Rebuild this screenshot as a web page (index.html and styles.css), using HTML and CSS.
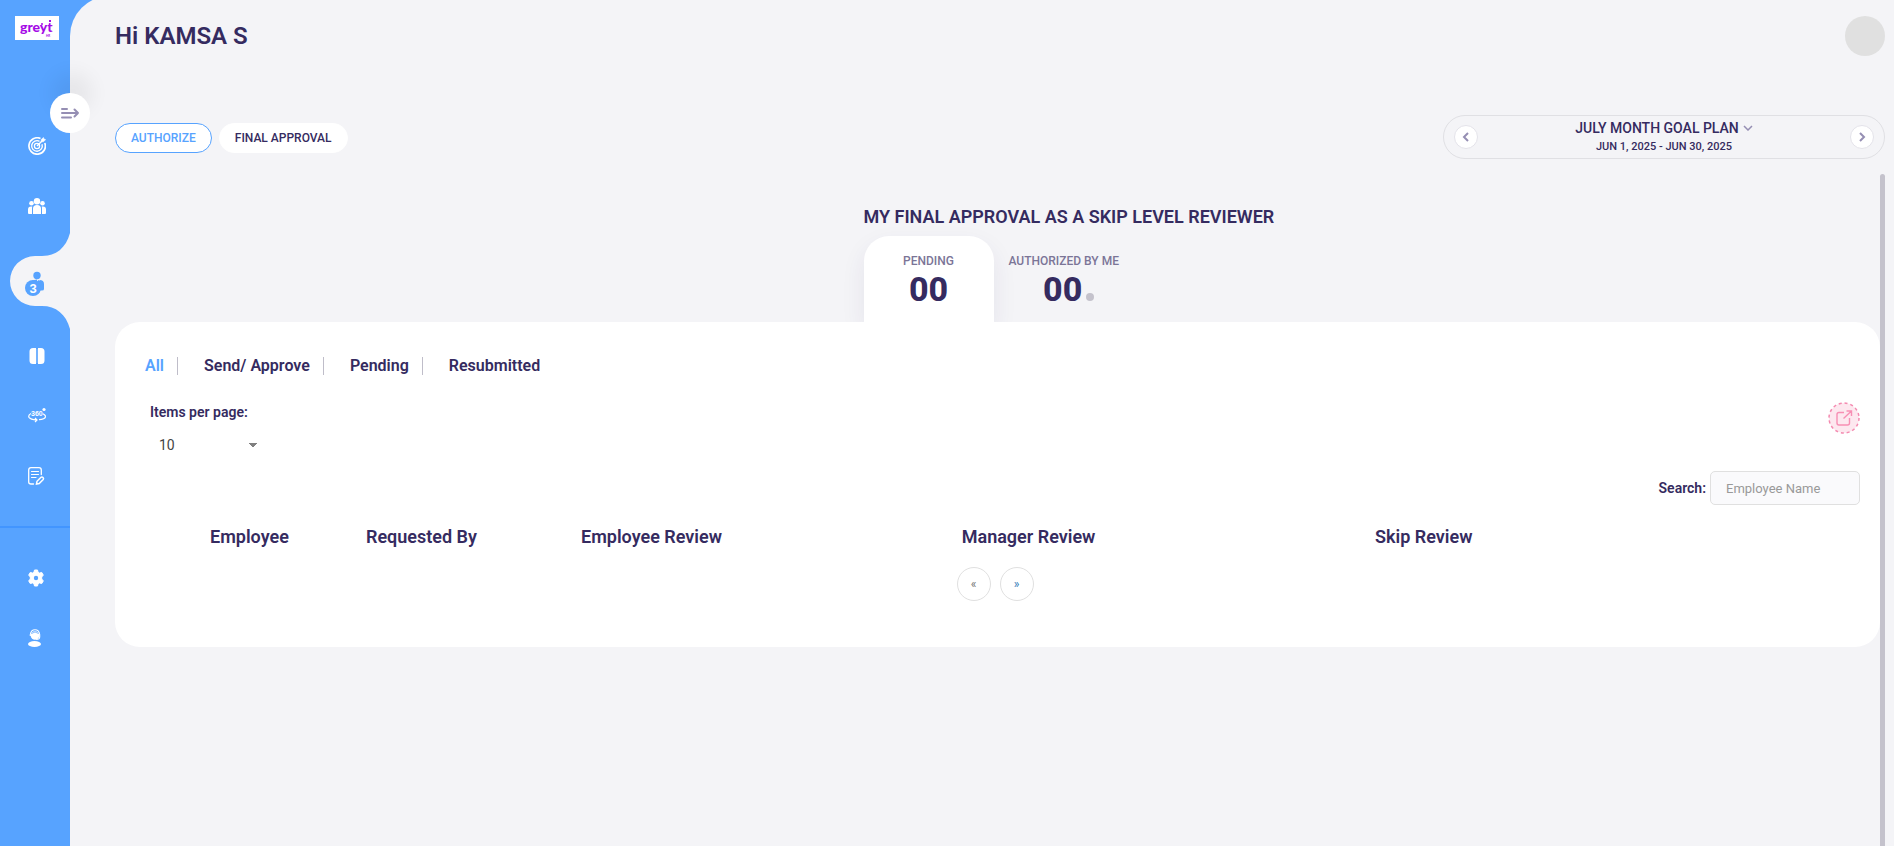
FILE: index.html
```html
<!doctype html>
<html lang="en">
  <head>
    <meta charset="utf-8">
    <meta name="viewport" content="width=device-width, initial-scale=1">
    <title>Goal plan approvals</title>
    <link rel="stylesheet" href="styles.css">
  </head>

  <body>
    <aside class="sidebar">
      <a href="#" class="logo" aria-label="greytHR">
        <svg width="44" height="24" viewBox="0 0 44 24">
          <text x="5" y="16" class="logo-text">greyt</text>
          <text x="31" y="21" class="logo-small">HR</text>
          <circle cx="27" cy="8" r="1"/>
          <rect x="34" y="4" width="2" height="2"/>
        </svg>
      </a>
      <button type="button" class="toggle" aria-label="Expand menu">
        <svg width="20" height="14" viewBox="0 0 20 14">
          <path d="M2 3h5M2 7h16M2 11.500h9M14.500 3.500L18 7l-3.500 3.500" fill="none" stroke="#958eb3" stroke-width="2" stroke-linecap="round" stroke-linejoin="round"/>
        </svg>
      </button>

      <nav class="menu">
        <a href="#" aria-label="Goals">
          <svg width="18" height="18" viewBox="0 0 18 18" fill="none" stroke="#fff">
            <path d="M12.500 1.500A8.200 8.200 0 1 0 16.800 6" stroke-width="1.700"/>
            <path d="M11.500 4.300A5.300 5.300 0 1 0 14 7.300" stroke-width="1.400"/>
            <circle cx="9" cy="9" r="2.600" stroke-width="1.300"/>
            <path d="M9 9l5-5" stroke-width="1.400"/>
            <path d="M13.200 4.800V2.600L15.500.4l.5 1.700 1.700.5-2.200 2.200z" fill="#fff" stroke-width=".5"/>
          </svg>
        </a>
        <a href="#" aria-label="Team">
          <svg width="18" height="18" viewBox="0 0 18 18" fill="#fff">
            <circle cx="9" cy="4.200" r="3.200"/>
            <circle cx="3.500" cy="6.300" r="2.300"/>
            <circle cx="14.500" cy="6.300" r="2.300"/>
            <path d="M5 17v-5.500Q5 8 9 8t4 3.500V17zM0 16v-3.500Q0 9.500 3 9.500h1.300Q4 10.300 4 12v5H1q-1 0-1-1zM18 16v-3.500q0-3-3-3h-1.300q.3.800.3 2.500v5h3q1 0 1-1z"/>
          </svg>
        </a>
        <a href="#" class="active" aria-label="Approvals">
          <svg width="70" height="96" viewBox="0 0 70 96">
            <path d="M70 0C66 15 56 23 42 23h-7a25 25 0 0 0 0 50h7c14 0 24 8 28 23z" fill="#f4f4f7"/>
            <g fill="#57a3ff">
              <circle cx="37" cy="42.500" r="3.700"/>
              <path d="M32 48q2-1.500 5-1.500v2l1.500-1.500 1 1v-1q4.500 0 4.500 4v5q0 1.500-2 1.500h-2v2h-8z"/>
              <circle cx="33" cy="55" r="8"/>
            </g>
            <text x="33" y="60" class="badge">3</text>
          </svg>
        </a>
        <a href="#" aria-label="Reviews">
          <svg width="18" height="18" viewBox="0 0 18 18" fill="#fff">
            <path d="M5 1h3v16H5q-3.500 0-3.500-3.500v-9Q1.500 1 5 1zM10 1h3q3.500 0 3.500 3.500v9Q16.500 17 13 17h-3z"/>
            <path d="M9 2v14" stroke="#fff" stroke-width=".7" opacity=".5"/>
          </svg>
        </a>
        <a href="#" class="feedback" aria-label="360 feedback">
          <svg width="18" height="18" viewBox="0 0 18 18" fill="none" stroke="#fff">
            <path d="M3 6.500Q0 8 1 10.300 2.500 12.500 8.500 12.800M7 11l2 2-2 2M11 12.700q6-.5 6.500-3 .2-1.500-2.500-3" stroke-width="1.200"/>
            <text x="3" y="9" class="deg">360</text>
            <circle cx="16" cy="2.500" r="1.600" fill="#fff" stroke="none"/>
          </svg>
        </a>
        <a href="#" aria-label="Reports">
          <svg width="18" height="18" viewBox="0 0 18 18" fill="none" stroke="#fff" stroke-linecap="round">
            <path d="M5.500 17H3Q.7 17 .7 15V3Q.7.700 3 .700h8q2.300 0 2.300 2.300v4.500" stroke-width="1.300"/>
            <path d="M3.500 4.500h7M3.500 7.500h7M3.500 10.500h4.500" stroke-width="1.200"/>
            <path d="M8.500 17l.5-2.700 4-4q1-.8 2 .2t.2 2l-4 4z" stroke-width="1.500"/>
          </svg>
        </a>
        <hr>
        <a href="#" aria-label="Settings">
          <svg width="16" height="18" viewBox="0 0 16 18">
            <path d="M6.500 1h3l.6 2.300 1.400.8 2.200-.7 1.600 2.700L13.700 8v2l1.600 1.900-1.600 2.700-2.200-.7-1.400.8L9.500 17h-3l-.6-2.300-1.400-.8-2.200.7-1.600-2.700L2.300 10V8L.7 6.100l1.600-2.700 2.200.7 1.400-.8z" fill="#fff" stroke="#fff" stroke-linejoin="round"/>
            <circle cx="8" cy="9" r="2.200" fill="#57a3ff"/>
          </svg>
        </a>
        <a href="#" aria-label="Support">
          <svg width="14" height="18" viewBox="0 0 14 18">
            <circle cx="7" cy="6.500" r="4.300" fill="#fff"/>
            <path d="M2.300 7V5.500Q3 .7 7 .7t4.700 4.800V8q0 2.500-3.500 2.500" fill="none" stroke="#fff" stroke-width="1.100"/>
            <path d="M3.500 4.500Q7 1.500 10.500 4.500" fill="none" stroke="#57a3ff" stroke-width=".7"/>
            <ellipse cx="6.500" cy="15" rx="6.500" ry="3" fill="#fff"/>
          </svg>
        </a>
      </nav>
    </aside>

    <main class="page">
      <header class="header">
        <h1>Hi KAMSA S</h1>
        <div class="avatar"></div>
      </header>

      <div class="toolbar">
        <div class="pills">
          <button type="button" class="pill selected">AUTHORIZE</button>
          <button type="button" class="pill">FINAL APPROVAL</button>
        </div>
        <div class="plan">
          <button type="button" class="round" aria-label="Previous plan">
            <svg width="8" height="10" viewBox="0 0 8 10"><path d="M6 1L2 5l4 4"/></svg>
          </button>
          <div class="plan-info">
            <a href="#" class="plan-name">JULY MONTH GOAL PLAN
              <svg width="10" height="6" viewBox="0 0 10 6"><path d="M1 1l4 4 4-4"/></svg>
            </a>
            <span class="plan-dates">JUN 1, 2025 - JUN 30, 2025</span>
          </div>
          <button type="button" class="round" aria-label="Next plan">
            <svg width="8" height="10" viewBox="0 0 8 10"><path d="M2 1l4 4-4 4"/></svg>
          </button>
        </div>
      </div>

      <div class="scroll-area">
        <div class="content">
          <section class="summary">
            <h2>MY FINAL APPROVAL AS A SKIP LEVEL REVIEWER</h2>
            <div class="tabs">
              <button type="button" class="tab current">
                <span class="tab-label">PENDING</span>
                <span class="count">00</span>
              </button>
              <button type="button" class="tab">
                <span class="tab-label">AUTHORIZED BY ME</span>
                <span class="count">00<i class="dot"></i></span>
              </button>
            </div>
          </section>

          <section class="card">
            <div class="filters">
              <a href="#" class="on">All</a>
              <a href="#">Send/ Approve</a>
              <a href="#">Pending</a>
              <a href="#">Resubmitted</a>
            </div>
            <div class="options">
              <div class="per-page">
                <label for="perPage">Items per page:</label>
                <select id="perPage">
                  <option>10</option>
                  <option>25</option>
                  <option>50</option>
                </select>
              </div>
              <button type="button" class="export" aria-label="Export">
                <svg width="32" height="32" viewBox="0 0 32 32" fill="none" stroke="#f78fb4">
                  <circle cx="16" cy="16" r="15" fill="#fde8ef" stroke="#f48ab0" stroke-width="1.500" stroke-dasharray="3 2.900"/>
                  <path d="M16 10.500h-5q-2 0-2 2V21q0 2 2 2h8.500q2 0 2-2v-5M15.500 16.500L23.500 9M18.500 9h5v5" stroke-width="1.400"/>
                </svg>
              </button>
            </div>
            <div class="search">
              <label for="search">Search:</label>
              <input id="search" type="text" placeholder="Employee Name">
            </div>
            <table>
              <thead>
                <tr>
                  <th class="col-check"></th>
                  <th class="col-employee">Employee</th>
                  <th class="col-requested">Requested By</th>
                  <th class="col-review">Employee Review</th>
                  <th class="col-manager">Manager Review</th>
                  <th>Skip Review</th>
                </tr>
              </thead>
            </table>
            <div class="pager">
              <button type="button" aria-label="Previous page">«</button>
              <button type="button" class="next" aria-label="Next page">»</button>
            </div>
          </section>
        </div>
        <div class="scrollbar"></div>
      </div>
    </main>
  </body>

</html>
```

FILE: styles.css
```css
* {
  box-sizing: border-box;
}

body {
  margin: 0;
  display: flex;
  min-height: 100vh;
  overflow: hidden;
  background: #57a3ff;
  color: #352b60;
  font-family: Roboto, "Liberation Sans", sans-serif;
}

a {
  color: inherit;
  text-decoration: none;
}

button {
  padding: 0;
  border: none;
  background: none;
  color: inherit;
  font-family: inherit;
  cursor: pointer;
}

svg {
  display: block;
}

.sidebar {
  position: relative;
  flex: none;
  width: 70px;
  padding-top: 16px;
  z-index: 1;
}

.logo {
  display: block;
  width: 44px;
  margin-left: 15px;
  background: white;
  fill: #a50be6;
}

.logo-text {
  font: 900 14px Lato, sans-serif;
}

.logo-small {
  font: 700 3px Lato, sans-serif;
}

/* sits over the edge of the sidebar */
.toggle {
  position: absolute;
  top: 93px;
  right: -20px;
  width: 40px;
  height: 40px;
  display: flex;
  align-items: center;
  justify-content: center;
  border-radius: 50%;
  background: white;
  box-shadow: 2px -20px 20px rgba(0, 0, 0, 0.06);
}

.menu {
  padding-top: 76px;
}

.menu a {
  display: flex;
  align-items: center;
  height: 60px;
  padding-left: 28px;
}

.menu .active {
  height: 90px;
  padding-left: 0;
}

.menu hr {
  height: 2px;
  margin: 20px 0;
  border: none;
  background: #4295ff;
}

.badge {
  fill: white;
  font: 700 13px "Liberation Sans", sans-serif;
  text-anchor: middle;
}

.deg {
  fill: white;
  stroke: none;
  font: 700 7px "Liberation Sans", sans-serif;
}

.page {
  flex: 1;
  display: flex;
  flex-direction: column;
  margin-top: -4px;
  padding: 20px 9px 0 45px;
  border-top-left-radius: 40px;
  background: #f4f4f7;
}

.header {
  display: flex;
  align-items: center;
  justify-content: space-between;
  height: 40px;
}

h1 {
  margin: 0;
  font-size: 24px;
  font-weight: 600;
}

.avatar {
  width: 40px;
  height: 40px;
  border-radius: 50%;
  background: #e0e0e0;
}

.toolbar {
  display: flex;
  align-items: center;
  justify-content: space-between;
  margin-top: 59px;
}

.pills {
  display: flex;
  gap: 7px;
  padding-top: 2px;
}

.pill {
  height: 30px;
  padding: 0 15px;
  border: 1px solid white;
  border-radius: 15px;
  background: white;
  font-size: 12px;
  font-weight: 500;
}

.pill.selected {
  border-color: #57a3ff;
  color: #57a3ff;
}

.plan {
  display: flex;
  align-items: center;
  justify-content: space-between;
  width: 442px;
  height: 44px;
  padding: 0 10px;
  border: 1px solid #e0e0e4;
  border-radius: 22px;
}

.round {
  display: flex;
  align-items: center;
  justify-content: center;
  width: 24px;
  height: 24px;
  border: 1px solid #e4e3ea;
  border-radius: 50%;
  background: white;
}

.plan svg {
  fill: none;
  stroke: #958eb3;
  stroke-width: 1.5px;
}

.plan .round svg {
  stroke-width: 2px;
}

.plan-info {
  display: flex;
  flex-direction: column;
  align-items: center;
}

.plan-name {
  display: flex;
  align-items: center;
  gap: 4px;
  font-size: 14px;
  font-weight: 500;
  line-height: 20px;
}

.plan-dates {
  font-size: 11px;
  font-weight: 500;
  line-height: 18px;
}

.scroll-area {
  flex: 1;
  display: flex;
  margin-top: 15px;
}

.content {
  flex: 1;
}

.scrollbar {
  width: 5px;
  border-radius: 3px 3px 0 0;
  background: #c4c2cc;
}

.summary {
  margin-left: calc(50% - 134px);
  padding-top: 32px;
}

h2 {
  margin: 0;
  font-size: 18px;
  font-weight: 600;
  line-height: 22px;
}

.tabs {
  display: flex;
  margin-top: 8px;
}

.tab {
  display: flex;
  flex-direction: column;
  align-items: center;
  height: 86px;
  padding: 18px 15px 0;
  border-radius: 25px 25px 0 0;
}

.tab.current {
  width: 130px;
  background: white;
  box-shadow: 0 10px 25px rgba(53, 43, 96, 0.08);
}

.tab-label {
  color: #7b7597;
  font-size: 12px;
  font-weight: 500;
  line-height: 14px;
}

.count {
  display: flex;
  align-items: baseline;
  gap: 4px;
  font-size: 34px;
  font-weight: 800;
  line-height: 42px;
}

/* the dot hangs outside the centred number */
.dot {
  width: 8px;
  height: 8px;
  margin-right: -10px;
  border-radius: 50%;
  background: #c4c2cc;
}

.card {
  position: relative;
  padding: 35px 20px 46px 30px;
  border-radius: 25px;
  background: white;
}

.filters {
  display: flex;
  font-size: 16px;
  font-weight: 600;
  line-height: 18px;
}

.filters a + a {
  margin-left: 13px;
  padding-left: 26px;
  border-left: 1px solid #bfbdc9;
}

.filters .on {
  color: #57a3ff;
}

.options {
  display: flex;
  justify-content: space-between;
  align-items: flex-start;
  margin-top: 27px;
}

.per-page {
  display: flex;
  flex-direction: column;
  padding-left: 5px;
}

label {
  font-size: 14px;
  font-weight: 600;
  line-height: 20px;
}

select {
  width: 120px;
  height: 32px;
  margin-top: 7px;
  padding: 0 9px;
  border: none;
  appearance: none;
  color: #444;
  font-family: inherit;
  font-size: 14px;
  background: linear-gradient(to top right, transparent 50%, #808080 50%) 99px 14px / 4px 5px no-repeat,
    linear-gradient(to top left, transparent 50%, #808080 50%) 103px 14px / 4px 5px no-repeat;
}

.export {
  width: 32px;
  height: 32px;
}

.search {
  display: flex;
  align-items: center;
  justify-content: flex-end;
  gap: 4px;
  margin-top: 10px;
}

.search input {
  width: 150px;
  height: 34px;
  padding: 0 15px;
  border: 1px solid #e0e0e0;
  border-radius: 5px;
  background: #fafafc;
  font-family: inherit;
  font-size: 13px;
}

.search input::placeholder {
  color: #999;
}

table {
  width: 100%;
  margin-top: 15px;
  border-collapse: collapse;
  table-layout: fixed;
}

th {
  height: 32px;
  padding: 0;
  font-size: 18px;
  font-weight: 600;
  text-align: left;
}

.col-check {
  width: 65px;
}

.col-employee {
  width: 156px;
}

.col-requested {
  width: 215px;
}

.col-review {
  width: 22.2%;
}

.col-manager {
  width: 24.1%;
}

.pager {
  display: flex;
  justify-content: center;
  gap: 9px;
  margin-top: 15px;
  padding-right: 15px;
}

.pager button {
  width: 34px;
  height: 34px;
  border: 1px solid #e0e0e0;
  border-radius: 50%;
  color: #777;
  font-size: 12px;
}

.pager .next {
  color: #337ab7;
}
```
